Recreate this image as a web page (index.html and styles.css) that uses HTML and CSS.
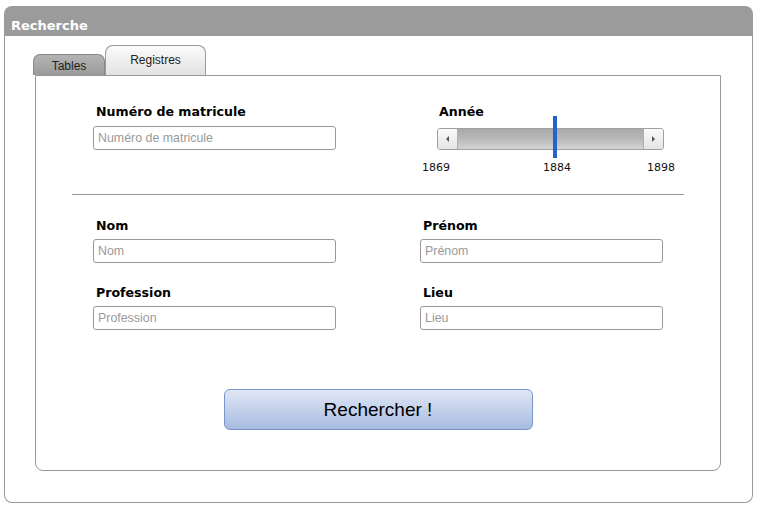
FILE: index.html
```html
<!DOCTYPE html>
<html lang="fr">
<head>
<meta charset="utf-8">
<title>Recherche</title>
<link rel="stylesheet" href="styles.css">
</head>
<body>
<div class="panel">
  <div class="panel-header">Recherche</div>
  <div class="panel-body">
    <div class="tabs">
      <div class="tab tab-inactive">Tables</div>
      <div class="tab tab-active">Registres</div>
    </div>
    <div class="tab-panel">
      <div class="grid top-grid">
        <div class="field">
          <label class="label">Numéro de matricule</label>
          <input class="input" type="text" placeholder="Numéro de matricule">
        </div>
        <div class="field year">
          <label class="label year-label">Année</label>
          <div class="slider">
            <div class="slider-btn slider-left"><span class="tri tri-left"></span></div>
            <div class="slider-track"><div class="thumb" style="left: 95px"></div></div>
            <div class="slider-btn slider-right"><span class="tri tri-right"></span></div>
          </div>
          <div class="ticks">
            <span>1869</span>
            <span class="tick-mid">1884</span>
            <span class="tick-end">1898</span>
          </div>
        </div>
      </div>
      <div class="separator"></div>
      <div class="grid bottom-grid">
        <div class="field">
          <label class="label">Nom</label>
          <input class="input" type="text" placeholder="Nom">
        </div>
        <div class="field">
          <label class="label">Prénom</label>
          <input class="input" type="text" placeholder="Prénom">
        </div>
        <div class="field">
          <label class="label">Profession</label>
          <input class="input" type="text" placeholder="Profession">
        </div>
        <div class="field">
          <label class="label">Lieu</label>
          <input class="input" type="text" placeholder="Lieu">
        </div>
      </div>
      <div class="actions">
        <button class="search-btn" type="button">Rechercher !</button>
      </div>
    </div>
  </div>
</div>
</body>
</html>
```

FILE: styles.css
```css
* { box-sizing: border-box; }

body {
  margin: 0;
  background: #fff;
  font-family: "Liberation Sans", Arial, sans-serif;
}

.panel {
  margin: 6px 0 0 4px;
  width: 749px;
}

.panel-header {
  height: 30px;
  background: #9b9b9b;
  border-radius: 8px 8px 0 0;
  color: #fff;
  font-family: "DejaVu Sans", sans-serif;
  font-weight: bold;
  font-size: 13px;
  line-height: 16px;
  padding: 12px 0 0 7px;
}

.panel-body {
  border: 1px solid #999;
  border-top: none;
  border-radius: 0 0 8px 8px;
  padding: 9px 31px 32px 30px;
  height: 467px;
}

.tabs {
  display: flex;
  align-items: flex-end;
  margin-left: -2px;
  height: 30px;
}

.tab {
  font-size: 12px;
  color: #222;
  text-align: center;
  border: 1px solid #999;
  border-bottom: none;
}

.tab-inactive {
  width: 72px;
  height: 21px;
  line-height: 20px;
  padding-top: 1px;
  border-color: #888;
  border-radius: 7px 7px 0 0;
  background: linear-gradient(#b4b4b4, #9a9a9a);
}

.tab-active {
  width: 101px;
  height: 30px;
  line-height: 29px;
  border-radius: 8px 8px 0 0;
  background: linear-gradient(#fbfbfb, #e2e2e2);
}

.tab-panel {
  border: 1px solid #999;
  border-radius: 0 0 8px 8px;
  padding: 28px 0 0 57px;
  height: 396px;
}

.grid {
  display: grid;
  grid-template-columns: 242px 243px;
  column-gap: 85px;
}

.field {
  display: flex;
  flex-direction: column;
  align-items: flex-start;
}

.label {
  font-family: "DejaVu Sans", sans-serif;
  font-weight: bold;
  font-size: 12.6px;
  line-height: 16px;
  color: #000;
  padding-left: 3px;
}

.input {
  margin-top: 6px;
  width: 243px;
  height: 24px;
  border: 1px solid #999;
  border-radius: 3px;
  padding: 0 4px;
  font-family: "Liberation Sans", Arial, sans-serif;
  font-size: 12.4px;
  color: #333;
  background: #fff;
}

.input::placeholder { color: #9a9a9a; }

.year-label { padding-left: 19px; }

.slider {
  margin: 8px 0 0 17px;
  width: 227px;
  height: 22px;
  display: flex;
  border: 1px solid #a0a0a0;
  border-radius: 3px;
}

.slider-btn {
  width: 20px;
  height: 20px;
  background: linear-gradient(#fafafa, #e4e4e4);
  display: flex;
  align-items: center;
  justify-content: center;
}

.slider-left { border-right: 1px solid #b0b0b0; border-radius: 2px 0 0 2px; }
.slider-right { border-left: 1px solid #b0b0b0; border-radius: 0 2px 2px 0; }

.tri {
  width: 0;
  height: 0;
  border-top: 3px solid transparent;
  border-bottom: 3px solid transparent;
}
.tri-left { border-right: 3px solid #555; }
.tri-right { border-left: 3px solid #555; }

.slider-track {
  flex: 1;
  position: relative;
  background: linear-gradient(#a9a9a9, #b8b8b8 50%, #d4d4d4);
}

.thumb {
  position: absolute;
  top: -13px;
  width: 4px;
  height: 42px;
  background: #2562c9;
}

.ticks {
  margin: 11px 0 0 2px;
  display: flex;
  font-family: "DejaVu Sans", sans-serif;
  font-size: 11px;
  line-height: 14px;
  color: #111;
}

.tick-mid { margin-left: 93px; }
.tick-end { margin-left: 76px; }

.separator {
  margin: 19px 36px 0 -21px;
  height: 1px;
  background: #999;
}

.bottom-grid {
  margin-top: 23px;
  row-gap: 22px;
}

.bottom-grid .input { margin-top: 5px; }

.actions {
  display: flex;
  justify-content: center;
  margin: 59px 0 0 -57px;
}

.search-btn {
  width: 309px;
  height: 41px;
  border: 1px solid #7a95c9;
  border-radius: 6px;
  background: linear-gradient(#e0e7f6, #a7bbe0);
  font-family: "Liberation Sans", Arial, sans-serif;
  font-size: 19px;
  color: #000;
  padding: 0;
}
```
